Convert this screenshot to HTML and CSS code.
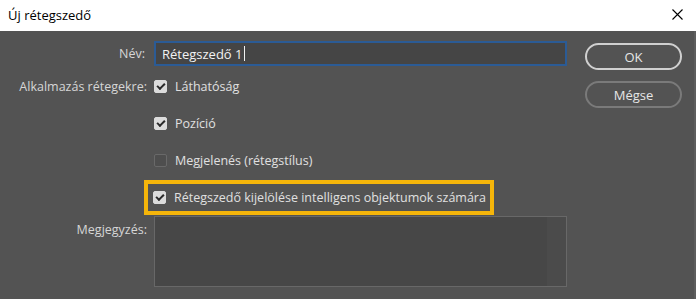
FILE: index.html
```html
<!DOCTYPE html>
<html lang="hu">
<head>
    <meta charset="UTF-8">
    <title>Új rétegszedő</title>
    <link rel="stylesheet" href="styles.css">
</head>
<body>
    <div class="titleBar">
        <span class="title">Új rétegszedő</span>
        <svg class="close" width="11" height="11" viewBox="0 0 11 11">
            <path d="M0.5 0.5 L10.5 10.5 M10.5 0.5 L0.5 10.5" stroke="#000" stroke-width="1.1" fill="none"/>
        </svg>
    </div>
    <div class="dialog">
        <div class="form">
            <label class="label nameLabel">Név:</label>
            <div class="nameInput">Rétegszedő 1<span class="caret"></span></div>

            <div class="label applyLabel">Alkalmazás rétegekre:</div>
            <div class="options">
                <div class="option"><span class="box checked"></span>Láthatóság</div>
                <div class="option"><span class="box checked"></span>Pozíció</div>
                <div class="option"><span class="box"></span>Megjelenés (rétegstílus)</div>
                <div class="option">
                    <div class="highlight"><span class="box checked"></span>Rétegszedő kijelölése intelligens objektumok számára</div>
                </div>
            </div>

            <div class="label noteLabel">Megjegyzés:</div>
            <div class="note"><div class="noteScroll"></div></div>
        </div>
        <div class="actions">
            <div class="btn primary">OK</div>
            <div class="btn">Mégse</div>
        </div>
        <div class="edge"></div>
    </div>
</body>
</html>
```

FILE: styles.css
```css
* {
    box-sizing: border-box;
    margin: 0;
    padding: 0;
}

body {
    width: 696px;
    height: 299px;
    overflow: hidden;
    background: #535353;
    font-family: 'Open Sans', 'Noto Sans', sans-serif;
    font-size: 12.5px;
    color: #e0e0e0;
}

.titleBar {
    height: 31px;
    background: #fff;
    display: flex;
    align-items: center;
    justify-content: space-between;
    padding: 0 13px 0 8px;
}

.titleBar .title {
    color: #000;
    font-size: 13px;
    margin-top: -1px;
}

.titleBar .close {
    margin-top: -2px;
}

.dialog {
    display: flex;
    height: 268px;
    position: relative;
}

.form {
    display: grid;
    grid-template-columns: 147px 413px;
    column-gap: 7px;
    align-content: start;
    padding-top: 10px;
}

.label {
    text-align: right;
    color: #d6d6d6;
}

.nameLabel {
    line-height: 25px;
    padding-right: 2px;
}

.nameInput {
    height: 25px;
    background: #454545;
    border: 2px solid #2b5b95;
    padding: 0 6px;
    line-height: 20px;
    font-size: 13px;
    color: #f2f2f2;
    display: flex;
    align-items: center;
}

.caret {
    width: 1px;
    height: 15px;
    background: #f0f0f0;
    margin-left: 1px;
}

.applyLabel {
    margin-top: 2px;
    line-height: 37px;
}

.options {
    margin-top: 2px;
}

.option {
    height: 37px;
    display: flex;
    align-items: center;
}

.box {
    width: 13px;
    height: 13px;
    border-radius: 2px;
    border: 1px solid #696969;
    background: #4e4e4e;
    margin-right: 8px;
    flex: none;
    display: flex;
    align-items: center;
    justify-content: center;
}

.box.checked {
    background: #dcdcdc;
    border-color: #dcdcdc;
}

.box.checked::after {
    content: '';
    width: 6px;
    height: 3px;
    border-left: 2px solid #2a2a2a;
    border-bottom: 2px solid #2a2a2a;
    transform: rotate(-45deg);
    margin-top: -2px;
}

.highlight {
    display: flex;
    align-items: center;
    height: 35px;
    margin-left: -10px;
    padding: 0 4px 0 5px;
    border: 4px solid #f5b50a;
    white-space: nowrap;
}

.noteLabel {
    padding-top: 5px;
}

.note {
    height: 71px;
    background: #474747;
    border: 1px solid #686868;
    display: flex;
    justify-content: flex-end;
}

.noteScroll {
    width: 19px;
    background: #4b4b4b;
}

.actions {
    display: flex;
    flex-direction: column;
    gap: 11px;
    margin-left: 18px;
    padding-top: 12px;
}

.btn {
    width: 97px;
    height: 27px;
    border-radius: 14px;
    border: 2px solid #7a7a7a;
    display: flex;
    align-items: center;
    justify-content: center;
    color: #e6e6e6;
    font-size: 13px;
}

.btn.primary {
    border-color: #d0d0d0;
}

.edge {
    position: absolute;
    right: 0;
    top: 0;
    bottom: 0;
    width: 2px;
    background: #5d5d5d;
}
```
